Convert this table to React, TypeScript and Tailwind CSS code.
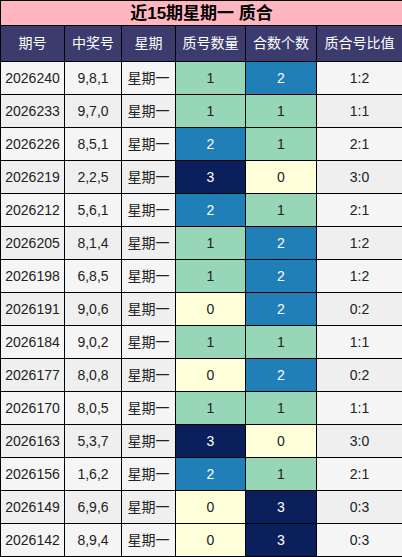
const rows: [string, string, number, number][] = [
  ['2026240', '9,8,1', 1, 2],
  ['2026233', '9,7,0', 1, 1],
  ['2026226', '8,5,1', 2, 1],
  ['2026219', '2,2,5', 3, 0],
  ['2026212', '5,6,1', 2, 1],
  ['2026205', '8,1,4', 1, 2],
  ['2026198', '6,8,5', 1, 2],
  ['2026191', '9,0,6', 0, 2],
  ['2026184', '9,0,2', 1, 1],
  ['2026177', '8,0,8', 0, 2],
  ['2026170', '8,0,5', 1, 1],
  ['2026163', '5,3,7', 3, 0],
  ['2026156', '1,6,2', 2, 1],
  ['2026149', '6,9,6', 0, 3],
  ['2026142', '8,9,4', 0, 3],
];

const heat: Record<number, string> = {
  0: 'bg-[#ffffd9] text-[#222]',
  1: 'bg-[#98d6b8] text-[#222]',
  2: 'bg-[#1f7fb6] text-white',
  3: 'bg-[#0b1f5c] text-white',
};

const headers = ['期号', '中奖号', '星期', '质号数量', '合数个数', '质合号比值'];

export default function App() {
  return (
    <div className="w-[402px] h-[557px] bg-white overflow-hidden" style={{ fontFamily: '"Liberation Sans", "Noto Sans CJK SC", sans-serif' }}>
      <table className="w-[402px] table-fixed border-collapse border border-black text-[14px]">
        <colgroup>
          <col className="w-[64px]" />
          <col className="w-[57px]" />
          <col className="w-[54px]" />
          <col className="w-[70px]" />
          <col className="w-[71px]" />
          <col className="w-[86px]" />
        </colgroup>
        <thead>
          <tr className="h-[25px]">
            <th colSpan={6} className="bg-[#ffb6c1] border border-black text-[17px] font-bold text-black p-0 leading-none">
              近15期星期一 质合
            </th>
          </tr>
          <tr className="h-[36px]">
            {headers.map((h) => (
              <th key={h} className="bg-[#3b3b6e] border border-black text-white font-normal text-[14px] p-0">
                {h}
              </th>
            ))}
          </tr>
        </thead>
        <tbody>
          {rows.map(([issue, nums, prime, comp], i) => {
            const base = i % 2 === 1 ? 'bg-[#efefef]' : 'bg-[#f5f5f5]';
            return (
              <tr key={issue} className="h-[33px] text-[#222]">
                <td className={`${base} border border-black text-center p-0`}>{issue}</td>
                <td className={`${base} border border-black text-center p-0`}>{nums}</td>
                <td className={`${base} border border-black text-center p-0`}>星期一</td>
                <td className={`${heat[prime]} border border-black text-center p-0`}>{prime}</td>
                <td className={`${heat[comp]} border border-black text-center p-0`}>{comp}</td>
                <td className={`${base} border border-black text-center p-0`}>
                  {prime}:{comp}
                </td>
              </tr>
            );
          })}
        </tbody>
      </table>
    </div>
  );
}
